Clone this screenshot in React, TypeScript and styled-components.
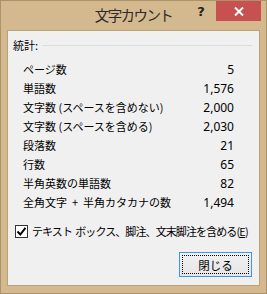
import React from 'react';
import styled, { createGlobalStyle } from 'styled-components';

const Global = createGlobalStyle`
  html, body { margin: 0; padding: 0; background: #ffffff; }
  * { box-sizing: border-box; }
`;

const font = `"Noto Sans CJK JP", "Noto Sans", sans-serif`;

const Window = styled.div`
  width: 267px;
  height: 294px;
  display: flex;
  flex-direction: column;
  background: #d4b98f;
  border: 1px solid #ad936b;
  font-family: ${font};
  color: #000;
`;

const TitleBar = styled.div`
  height: 29px;
  display: grid;
  grid-template-columns: 1fr auto 1fr;
  align-items: start;
`;

const Title = styled.div`
  grid-column: 2;
  font-size: 14.5px;
  letter-spacing: -1.6px;
  line-height: 28px;
  color: #2a2a2a;
`;

const Controls = styled.div`
  grid-column: 3;
  justify-self: end;
  display: flex;
  margin-right: 5px;
`;

const CaptionButton = styled.div<{ $close?: boolean }>`
  width: ${(p) => (p.$close ? '45px' : '30px')};
  height: 20px;
  display: flex;
  align-items: center;
  justify-content: center;
  background: ${(p) => (p.$close ? '#c75050' : 'transparent')};
  color: ${(p) => (p.$close ? '#ffffff' : '#222')};
  font-family: "DejaVu Sans", sans-serif;
  font-weight: bold;
  font-size: 13px;
`;

const Client = styled.div`
  flex: 1;
  margin: 0 6px 7px 6px;
  border: 1px solid #b8a07a;
  background: #f0f0f0;
  padding: 5px 0 0 5px;
  display: flex;
  flex-direction: column;
  font-size: 11px;
`;

const GroupHeader = styled.div`
  display: flex;
  align-items: center;
  gap: 4px;
  line-height: 19px;
  margin-right: 7px;
`;

const Rule = styled.div`
  flex: 1;
  height: 1px;
  background: #dcdcdc;
  margin-top: -1px;
`;

const Stats = styled.div`
  margin: 5px 25px 0 10px;
  display: flex;
  flex-direction: column;
`;

const Row = styled.div`
  display: flex;
  justify-content: space-between;
  line-height: 19px;
  height: 19px;
  white-space: pre;
`;

const Value = styled.span`
  font-family: "Noto Sans", sans-serif;
  font-size: 12px;
`;

const CheckRow = styled.label`
  display: flex;
  align-items: center;
  gap: 4px;
  margin: 10px 0 0 2px;
  line-height: 19px;
  white-space: pre;
  letter-spacing: -0.9px;
`;

const Box = styled.span`
  width: 13px;
  height: 13px;
  border: 1px solid #333;
  background: #fff;
  display: flex;
  align-items: center;
  justify-content: center;
`;

const Footer = styled.div`
  display: flex;
  justify-content: flex-end;
  margin: 11px 7px 0 0;
`;

const Button = styled.div`
  width: 73px;
  height: 25px;
  border: 1px solid #3c96f0;
  background: linear-gradient(#f1f1f1, #e6e6e6);
  padding: 2px;
  display: flex;
`;

const FocusRect = styled.div`
  flex: 1;
  border: 1px dotted #000;
  display: flex;
  align-items: center;
  justify-content: center;
  font-size: 11.5px;
`;

const stats: [string, string][] = [
  ['ページ数', '5'],
  ['単語数', '1,576'],
  ['文字数 (スペースを含めない)', '2,000'],
  ['文字数 (スペースを含める)', '2,030'],
  ['段落数', '21'],
  ['行数', '65'],
  ['半角英数の単語数', '82'],
  ['全角文字  +  半角カタカナの数', '1,494'],
];

export default function App() {
  return (
    <>
      <Global />
      <Window>
        <TitleBar>
          <Title>文字カウント</Title>
          <Controls>
            <CaptionButton>?</CaptionButton>
            <CaptionButton $close>
              <svg width="10" height="9" viewBox="0 0 10 9">
                <path d="M1 0.5 L9 8.5 M9 0.5 L1 8.5" stroke="#fff" strokeWidth="2" />
              </svg>
            </CaptionButton>
          </Controls>
        </TitleBar>
        <Client>
          <GroupHeader>
            <span>統計:</span>
            <Rule />
          </GroupHeader>
          <Stats>
            {stats.map(([label, value]) => (
              <Row key={label}>
                <span>{label}</span>
                <Value>{value}</Value>
              </Row>
            ))}
          </Stats>
          <CheckRow>
            <Box>
              <svg width="11" height="11" viewBox="0 0 11 11">
                <path d="M1.5 5.5 L4.3 8.5 L9.5 1.8" stroke="#000" strokeWidth="2" fill="none" />
              </svg>
            </Box>
            <span>テキスト  ボックス、脚注、文末脚注を含める(<u>E</u>)</span>
          </CheckRow>
          <Footer>
            <Button>
              <FocusRect>閉じる</FocusRect>
            </Button>
          </Footer>
        </Client>
      </Window>
    </>
  );
}
